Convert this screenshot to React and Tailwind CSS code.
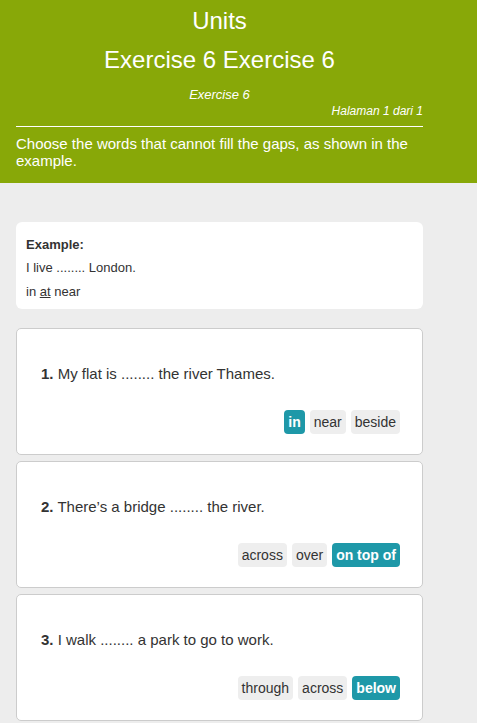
import React from 'react'

const questions = [
  { n: 1, text: 'My flat is ........ the river Thames.', opts: ['in', 'near', 'beside'], picked: 'in' },
  { n: 2, text: 'There’s a bridge ........ the river.', opts: ['across', 'over', 'on top of'], picked: 'on top of' },
  { n: 3, text: 'I walk ........ a park to go to work.', opts: ['through', 'across', 'below'], picked: 'below' },
]

const Chip = ({ label, active }) => (
  <span
    className={
      active
        ? 'block h-[24px] px-[4px] rounded-[4px] bg-[#1e98a8] text-white font-bold text-[14px] leading-[24px]'
        : 'block h-[24px] px-[4px] rounded-[4px] bg-[#eeeeee] text-[#333] text-[14px] leading-[24px]'
    }
  >
    {label}
  </span>
)

const Question = ({ q }) => (
  <div className="h-[127px] bg-white border border-[#cccccc] rounded-[5px] pl-[24px] pr-[22px] pt-[35px] flex flex-col">
    <p className="text-[15px] leading-[20px] text-[#333]">
      <b>{q.n}.</b> {q.text}
    </p>
    <div className="flex justify-end gap-[5px] mt-[26px]">
      {q.opts.map((o) => (
        <Chip key={o} label={o} active={o === q.picked} />
      ))}
    </div>
  </div>
)

export default function App() {
  return (
    <div className="min-h-screen bg-[#ededed] font-['Liberation_Sans',Arial,sans-serif]">
      <div className="bg-[#88a808] text-white h-[183px]">
        <div className="w-[407px] ml-[16px] pt-[6px]">
          <h1 className="text-center text-[24px] leading-[30px]">Units</h1>
          <h2 className="text-center text-[24px] leading-[30px] mt-[9px]">Exercise 6 Exercise 6</h2>
          <p className="text-center italic text-[13px] leading-[16px] mt-[12px]">Exercise 6</p>
          <p className="text-right italic text-[12px] leading-[14px] mt-[1px]">Halaman 1 dari 1</p>
          <div className="h-px bg-white mt-[8px]" />
          <p className="text-[15px] leading-[17px] mt-[8px]">
            Choose the words that cannot fill the gaps, as shown in the example.
          </p>
        </div>
      </div>

      <div className="w-[407px] ml-[16px] pt-[39px] pb-[4px] flex flex-col">
        <div className="bg-white rounded-[6px] px-[10px] pt-[14px] pb-[9px] text-[#333]">
          <p className="font-bold text-[13px] leading-[18px]">Example:</p>
          <p className="text-[13px] leading-[16px] mt-[6px]">I live ........ London.</p>
          <p className="text-[13px] leading-[16px] mt-[8px]">
            in <span className="underline">at</span> near
          </p>
        </div>

        <div className="flex flex-col gap-[6px] mt-[19px]">
          {questions.map((q) => (
            <Question key={q.n} q={q} />
          ))}
        </div>
      </div>
    </div>
  )
}
